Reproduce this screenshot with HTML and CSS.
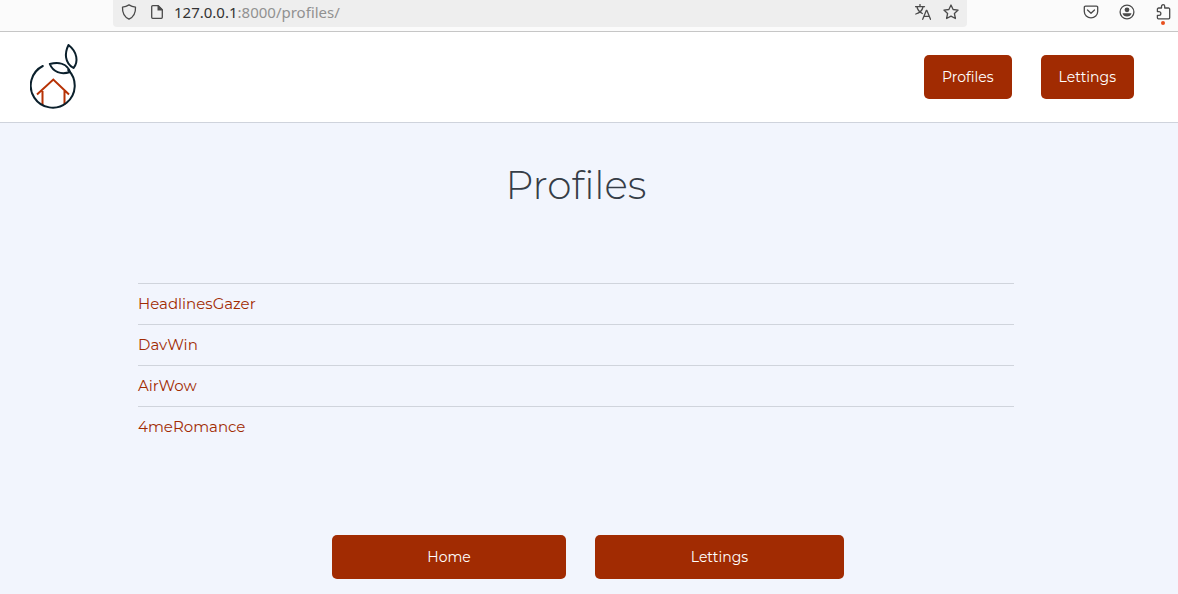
FILE: index.html
```html
<!DOCTYPE html>
<html lang="en">
<head>
<meta charset="utf-8">
<meta name="viewport" content="width=device-width, initial-scale=1">
<title>Profiles</title>
<link rel="stylesheet" href="styles.css">
</head>
<body>
<div class="toolbar">
  <div class="address">
    <svg class="icon" viewBox="0 0 16 16" aria-hidden="true"><path d="M8 .9C6.300 2 3.800 2.900 1.500 3.100 1.200 9 3.500 13 8 15.200c4.500-2.200 6.800-6.200 6.500-12.100C12.200 2.900 9.700 2 8 .9Z"/></svg>
    <svg class="icon" viewBox="0 0 16 16" aria-hidden="true"><path d="M3.700 1.700h5.600l4 4v7.600a1 1 0 0 1-1 1H3.700a1 1 0 0 1-1-1V2.700a1 1 0 0 1 1-1Z"/><path class="solid" d="M8.500 1.500h1l4 4v1h-5Z"/></svg>
    <span class="url"><span class="host">127.0.0.1</span>:8000/profiles/</span>
    <button class="tool" type="button" aria-label="Translate page"><svg class="icon" viewBox="0 0 16 16" aria-hidden="true"><path d="M.5 2.700h9M5 .5v2.200M2 3c.6 3 3 5.300 5.300 6.500M8 3C7.300 6.300 4 9 .8 10M7.700 15.300l3.700-9h.4l3.700 9M9 12.300h5.200"/></svg></button>
    <button class="tool" type="button" aria-label="Bookmark page"><svg class="icon" viewBox="0 0 16 16" aria-hidden="true"><path d="m8 1 2.100 4.500 5 .6-3.700 3.400 1 5L8 12.100l-4.400 2.400 1-5L.9 6.100l5-.6Z"/></svg></button>
  </div>
  <div class="actions">
    <button class="tool" type="button" aria-label="Save to Pocket"><svg class="icon" viewBox="0 0 16 16" aria-hidden="true"><path d="M2.500 2.200h11a1.200 1.200 0 0 1 1.200 1.200V7.500a6.700 6.300 0 0 1-13.400 0V3.400a1.200 1.200 0 0 1 1.200-1.200ZM4.500 6 8 9.300 11.500 6"/></svg></button>
    <button class="tool" type="button" aria-label="Account"><svg class="icon" viewBox="0 0 16 16" aria-hidden="true"><circle cx="8" cy="8" r="6.900"/><circle class="solid" cx="8" cy="5.800" r="2.400"/><path class="solid" d="M3.500 9.200h9c-.3 2-2.200 3.300-4.500 3.300S3.800 11.200 3.500 9.200Z"/></svg></button>
    <button class="tool alert" type="button" aria-label="Extensions"><svg class="icon" viewBox="0 0 16 16" aria-hidden="true"><path d="M6.500 4V2.300a1.600 1.600 0 0 1 3.200 0V4h3.800a1.200 1.200 0 0 1 1.200 1.200v8.600a1 1 0 0 1-1 1H3.400a1 1 0 0 1-1-1v-2.500H4a1.700 1.700 0 0 0 0-3.700H2.400V5.200A1.200 1.200 0 0 1 3.600 4Z"/></svg></button>
  </div>
</div>
<header class="header">
  <a class="brand" href="#" aria-label="Home page"><svg class="logo" viewBox="0 0 50 70" aria-hidden="true">
    <path class="house" d="M12.500 63V49M34.500 63V49M7 52.500 23.300 37.500 39 52.500"/>
    <path class="fruit" d="M12.800 24A22 22 0 1 0 38.200 28"/>
    <path class="fruit" d="M19.800 22C28 20 37 21 40 30 31 33 23 30 19.800 22ZM38.500 3C47.500 10 48.500 20 43.500 26 34.500 21 34.500 11 38.500 3Z"/>
  </svg></a>
  <nav class="nav">
    <a class="btn" href="#">Profiles</a>
    <a class="btn" href="#">Lettings</a>
  </nav>
</header>
<main class="main">
  <h1 class="title">Profiles</h1>
  <ul class="list">
    <li><a href="#">HeadlinesGazer</a></li>
    <li><a href="#">DavWin</a></li>
    <li><a href="#">AirWow</a></li>
    <li><a href="#">4meRomance</a></li>
  </ul>
  <div class="links">
    <a class="btn btn-home" href="#">Home</a>
    <a class="btn btn-lettings" href="#">Lettings</a>
  </div>
</main>
</body>
</html>
```
FILE: styles.css
```css
* { box-sizing: border-box; }
html { background: #f2f5fd; }
body {
  margin: 0;
  color: #363d47;
  font-family: Metropolis, Montserrat, Inter, sans-serif;
  font-size: 15px;
  line-height: 24px;
}
a { color: #a12b02; text-decoration: none; }

.toolbar {
  display: flex;
  height: 32px;
  padding-left: 113px;
  background: #fbfbfb;
  border-bottom: 1px solid #c6c6c6;
}
.address {
  display: flex;
  flex: 1;
  gap: 12px;
  align-items: center;
  height: 27px;
  padding: 0 8px 4px;
  background: #eeeeee;
  border-radius: 0 0 4px 4px;
}
.icon {
  display: block;
  flex: none;
  width: 16px;
  height: 16px;
  fill: none;
  stroke: #4a4a4a;
  stroke-width: 1.300;
  stroke-linejoin: round;
  stroke-linecap: round;
}
.icon .solid { fill: #4a4a4a; stroke: none; }
.url {
  flex: 1;
  margin-left: -3px;
  color: #919191;
  font-family: "Noto Sans", sans-serif;
  font-size: 15px;
  line-height: 20px;
}
.host { color: #333; }
.tool { position: relative; padding: 0; border: 0; background: none; }
.actions {
  display: flex;
  gap: 20px;
  align-items: center;
  height: 23px;
  padding: 0 7px 0 116px;
}
.alert::after {
  content: "";
  position: absolute;
  top: 17px;
  left: 6px;
  width: 4px;
  height: 4px;
  border-radius: 50%;
  background: #e8501e;
}

.header {
  display: flex;
  align-items: center;
  justify-content: space-between;
  padding: 10px 44px 10px 30px;
  background: #fff;
  border-bottom: 1px solid #cfd3dc;
}
.logo {
  display: block;
  width: 50px;
  height: 70px;
  fill: none;
  stroke: #0b202c;
  stroke-width: 2;
  stroke-linecap: round;
  stroke-linejoin: round;
}
.logo .house { stroke: #b73205; stroke-linecap: butt; stroke-linejoin: miter; }
.nav { display: flex; gap: 29px; }
.btn {
  padding: 10px 18px;
  border-radius: 5px;
  background: #a12b02;
  color: #fff;
  font-size: 14px;
  text-align: center;
}

.main { padding: 34px 164px 16px 138px; }
.title {
  margin: 0 0 70px;
  font-size: 39px;
  font-weight: 300;
  line-height: 56px;
  text-align: center;
}
.list { margin: 0; padding: 0; list-style: none; }
.list li { padding: 8px 0; border-top: 1px solid #d0d4dc; }
.links {
  display: flex;
  gap: 29px;
  justify-content: center;
  margin-top: 88px;
  padding-left: 24px;
}
.btn-home { width: 234px; }
.btn-lettings { width: 249px; }
```
